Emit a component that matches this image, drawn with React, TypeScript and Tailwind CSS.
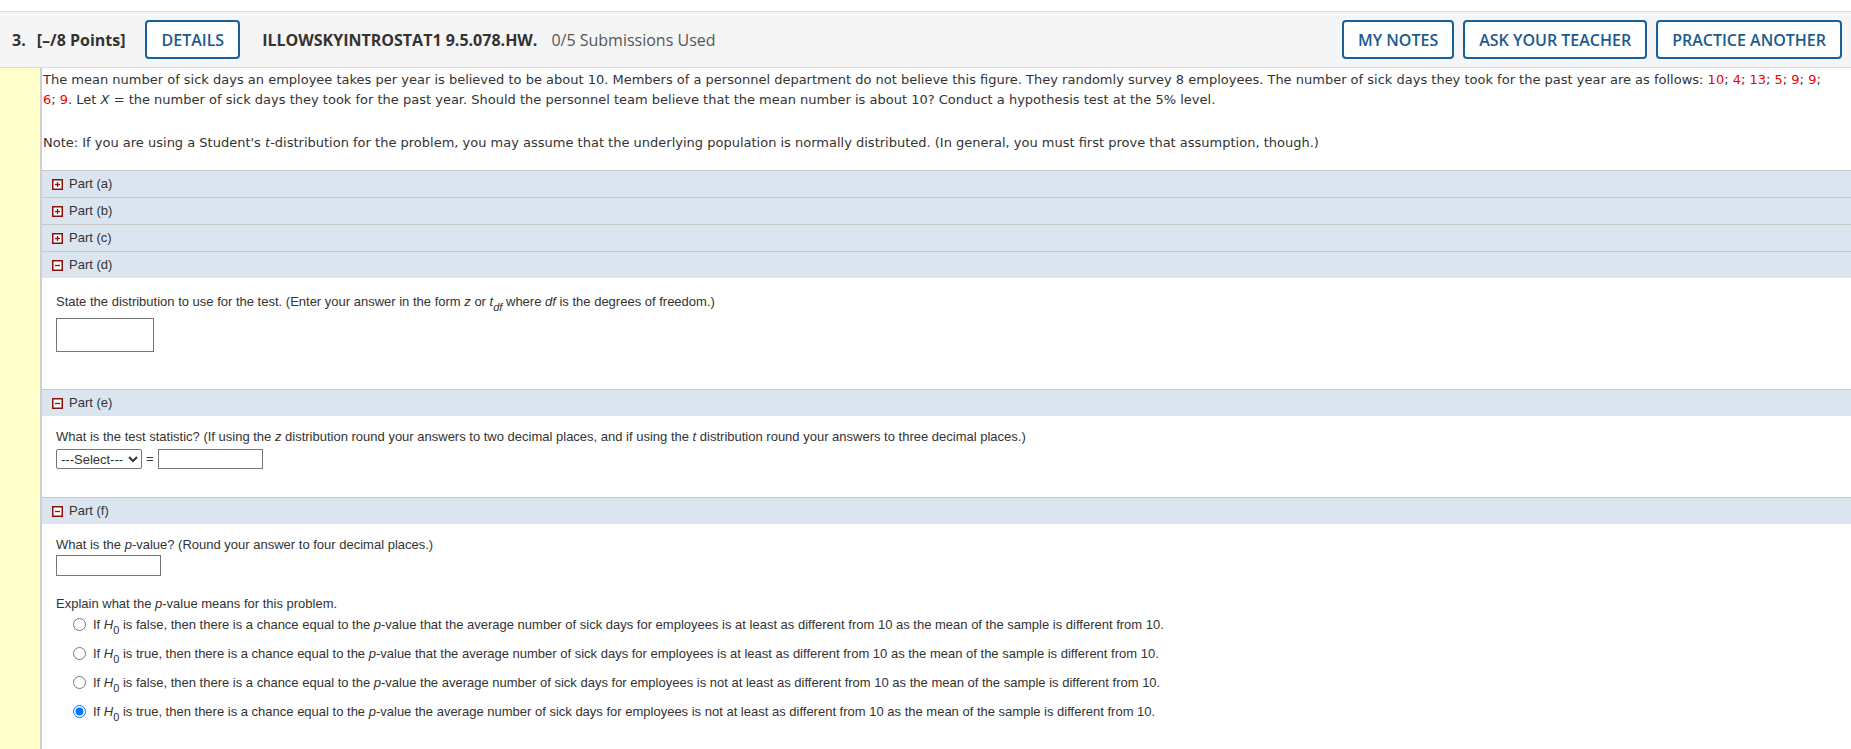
import React from 'react';

const PARTS_CLOSED = ['a', 'b', 'c'];

const OPTIONS = [
    { truth: 'false', rest: 'that the average number of sick days for employees is at least as different from 10 as the mean of the sample is different from 10.' },
    { truth: 'true', rest: 'that the average number of sick days for employees is at least as different from 10 as the mean of the sample is different from 10.' },
    { truth: 'false', rest: 'the average number of sick days for employees is not at least as different from 10 as the mean of the sample is different from 10.' },
    { truth: 'true', rest: 'the average number of sick days for employees is not at least as different from 10 as the mean of the sample is different from 10.' },
];

function ToggleIcon({ open }: { open: boolean }) {
    return (
        <svg width="11" height="11" viewBox="0 0 11 11" className="shrink-0">
            <rect x="0.75" y="0.75" width="9.5" height="9.5" fill="#fff" stroke="#8b1010" strokeWidth="1.5" />
            <line x1="3" y1="5.5" x2="8" y2="5.5" stroke="#8b1010" strokeWidth="1.3" />
            {!open && <line x1="5.5" y1="3" x2="5.5" y2="8" stroke="#8b1010" strokeWidth="1.3" />}
        </svg>
    );
}

function PartBar({ label, open }: { label: string; open: boolean }) {
    return (
        <div className="h-[27px] flex items-center gap-[6px] pl-[10px] bg-[#dae5ef] border-t border-[#c8c8c8] text-[13px] text-[#333]">
            <ToggleIcon open={open} />
            <span>Part ({label})</span>
        </div>
    );
}

function OutlineButton({ children }: { children: React.ReactNode }) {
    return (
        <button className="h-[39px] px-[14px] rounded-[4px] border-2 border-[#16619a] bg-white text-[#1b5b8c] text-[16px] font-semibold uppercase">
            {children}
        </button>
    );
}

const H0 = () => (
    <>
        <i>H</i>
        <sub className="text-[11px] align-[-3px]">0</sub>
    </>
);

const Red = ({ children }: { children: React.ReactNode }) => <span className="text-[#e00]">{children}</span>;

export default function App() {
    return (
        <main className="min-h-screen bg-white pt-[11px]" style={{ fontFamily: 'Arial, "Liberation Sans", sans-serif' }}>

            {/* ── question header ── */}
            <div
                className="h-[57px] flex items-center bg-[#f5f5f5] border-y border-[#dcdcdc] pl-[12px] pr-[9px] text-[16px]"
                style={{ fontFamily: '"Open Sans", "Liberation Sans", sans-serif' }}
            >
                <span className="font-bold text-[#333]">3.</span>
                <span className="font-bold text-[#333] ml-[11px]">[–/8 Points]</span>
                <div className="ml-[20px]">
                    <OutlineButton>Details</OutlineButton>
                </div>
                <span className="ml-[22px] font-bold text-[#333]">ILLOWSKYINTROSTAT1 9.5.078.HW.</span>
                <span className="ml-[14px] text-[#555]">0/5 Submissions Used</span>
                <div className="ml-auto flex gap-[9px]">
                    <OutlineButton>My Notes</OutlineButton>
                    <OutlineButton>Ask Your Teacher</OutlineButton>
                    <OutlineButton>Practice Another</OutlineButton>
                </div>
            </div>

            <div className="flex min-h-[681px]">
                {/* yellow gutter */}
                <div className="w-[42px] shrink-0 bg-[#ffffcc] border-r-2 border-[#cfcfcf]" />

                <div className="flex-1 min-w-0">
                    {/* problem text */}
                    <div
                        className="pl-[1px] pt-[2px] pb-[17px] pr-[2px] text-[13px] leading-[20px] text-[#333]"
                        style={{ fontFamily: '"DejaVu Sans", Verdana, sans-serif' }}
                    >
                        <p>
                            The mean number of sick days an employee takes per year is believed to be about 10. Members of a personnel department do not believe this figure. They randomly survey 8 employees. The number of sick days they took for the past year are as follows:{' '}
                            <Red>10</Red>; <Red>4</Red>; <Red>13</Red>; <Red>5</Red>; <Red>9</Red>; <Red>9</Red>;
                            <br />
                            <Red>6</Red>; <Red>9</Red>. Let <i>X</i> = the number of sick days they took for the past year. Should the personnel team believe that the mean number is about 10? Conduct a hypothesis test at the 5% level.
                        </p>
                        <p className="mt-[23px]">
                            Note: If you are using a Student's <i>t</i>-distribution for the problem, you may assume that the underlying population is normally distributed. (In general, you must first prove that assumption, though.)
                        </p>
                    </div>

                    {/* collapsed parts */}
                    {PARTS_CLOSED.map((p) => (
                        <PartBar key={p} label={p} open={false} />
                    ))}

                    {/* part d */}
                    <PartBar label="d" open />
                    <div className="pl-[14px] pt-[16px] pb-[37px] text-[13px] text-[#333]">
                        <p className="leading-[16px]">
                            State the distribution to use for the test. (Enter your answer in the form <i>z</i> or <i>t</i>
                            <sub className="text-[11px] align-[-2px]"><i>df</i></sub> where <i>df</i> is the degrees of freedom.)
                        </p>
                        <input type="text" className="mt-[8px] block w-[98px] h-[34px] border border-[#767676] bg-white" />
                    </div>

                    {/* part e */}
                    <PartBar label="e" open />
                    <div className="pl-[14px] pt-[13px] pb-[28px] text-[13px] text-[#333]">
                        <p className="leading-[16px]">
                            What is the test statistic? (If using the <i>z</i> distribution round your answers to two decimal places, and if using the <i>t</i> distribution round your answers to three decimal places.)
                        </p>
                        <div className="mt-[4px] flex items-center gap-[4px]">
                            <select className="h-[20px] w-[86px] border border-[#767676] rounded-[2px] bg-white text-[13px] text-[#333]">
                                <option>---Select---</option>
                            </select>
                            <span className="text-[13px]">=</span>
                            <input type="text" className="w-[105px] h-[20px] border border-[#767676] bg-white" />
                        </div>
                    </div>

                    {/* part f */}
                    <PartBar label="f" open />
                    <div className="pl-[14px] pt-[13px] pb-[20px] text-[13px] text-[#333]">
                        <p className="leading-[16px]">
                            What is the <i>p</i>-value? (Round your answer to four decimal places.)
                        </p>
                        <input type="text" className="mt-[2px] block w-[105px] h-[21px] border border-[#767676] bg-white" />

                        <p className="mt-[20px] leading-[16px]">
                            Explain what the <i>p</i>-value means for this problem.
                        </p>
                        <div className="mt-[3px] pl-[17px] flex flex-col gap-[10px]">
                            {OPTIONS.map((o, i) => (
                                <label key={i} className="flex items-center gap-[7px] h-[19px] leading-[16px]">
                                    <input type="radio" name="pvalue" defaultChecked={i === 3} className="m-0 w-[13px] h-[13px]" />
                                    <span>
                                        If <H0 /> is {o.truth}, then there is a chance equal to the <i>p</i>-value {o.rest}
                                    </span>
                                </label>
                            ))}
                        </div>
                    </div>
                </div>
            </div>
        </main>
    );
}
